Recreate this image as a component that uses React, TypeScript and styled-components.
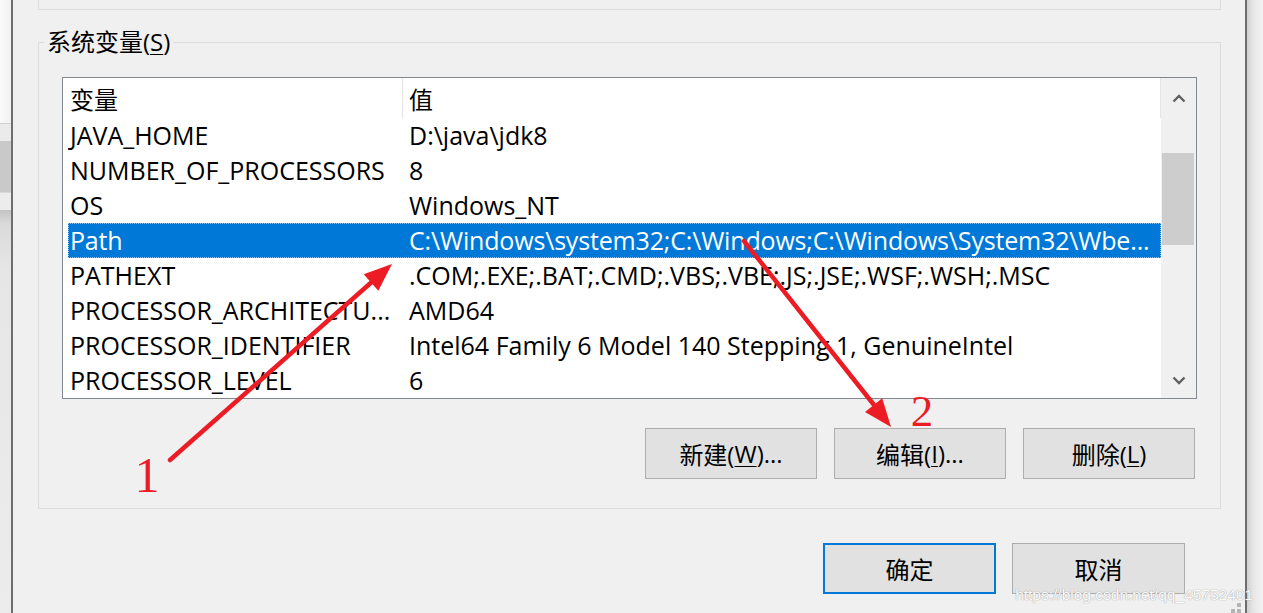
import React from "react";
import styled, { createGlobalStyle } from "styled-components";

const GlobalStyle = createGlobalStyle`
  html, body { margin: 0; padding: 0; background: #f0f0f0; overflow: hidden; }
  body { font-family: "Open Sans", "Noto Sans CJK SC", sans-serif; }
  * { box-sizing: border-box; }
`;

const Page = styled.div`
  position: relative;
  display: flex;
  width: 1263px;
  height: 613px;
  overflow: hidden;
  background: #f0f0f0;
  color: #000;
  font-size: 24px;
`;

const BehindStrip = styled.div`
  width: 11px;
  flex-shrink: 0;
  display: flex;
  flex-direction: column;
`;

const Segment = styled.div<{ $h?: number; $bg: string }>`
  height: ${(p) => (p.$h ? `${p.$h}px` : "auto")};
  flex: ${(p) => (p.$h ? "0 0 auto" : "1")};
  background: ${(p) => p.$bg};
`;

const EdgeLine = styled.div`
  width: 2px;
  flex-shrink: 0;
  background: #6e6e6e;
`;

const Shadow = styled.div`
  width: 16px;
  flex-shrink: 0;
  background: linear-gradient(to right, #cfcfcf, #e6e6e6 6px, #f3f3f3);
`;

const Dialog = styled.div`
  flex: 1;
  min-width: 0;
  display: flex;
  flex-direction: column;
`;

const PrevGroup = styled.div`
  height: 10px;
  margin: 0 24px 0 25px;
  border: 1px solid #dcdcdc;
  border-top: none;
`;

const GroupBox = styled.fieldset`
  margin: 17px 24px 0 25px;
  padding: 20px 23px 29px 23px;
  border: 1px solid #dcdcdc;
  min-width: 0;
`;

const Legend = styled.legend`
  font-size: 24px;
  line-height: 30px;
  padding: 0 3px;
  margin-left: -18px;
`;

const Mn = styled.span`
  text-decoration: underline;
  text-decoration-thickness: 1px;
  text-underline-offset: 3px;
`;

const ListBox = styled.div`
  height: 322px;
  display: flex;
  border: 1px solid #828790;
  background: #fff;
`;

const Table = styled.div`
  flex: 1;
  min-width: 0;
  display: flex;
  flex-direction: column;
`;

const HeaderRow = styled.div`
  height: 40px;
  display: flex;
`;

const HeaderCell = styled.div<{ $w?: number; $pad: number }>`
  ${(p) => (p.$w ? `width: ${p.$w}px;` : "flex: 1;")}
  padding-left: ${(p) => p.$pad}px;
  padding-top: 3px;
  line-height: 38px;
  border-right: 1px solid #e5e5e5;
  white-space: nowrap;
`;

const Row = styled.div<{ $selected?: boolean }>`
  height: 35px;
  margin-left: 5px;
  display: flex;
  font-size: 25px;
  line-height: 35px;
  white-space: nowrap;
  background: ${(p) => (p.$selected ? "#0078d7" : "transparent")};
  color: ${(p) => (p.$selected ? "#fff" : "#000")};
  outline: ${(p) => (p.$selected ? "1px dotted #8fc2ee" : "none")};
  outline-offset: -1px;
  letter-spacing: ${(p) => (p.$selected ? "-0.17px" : "0")};
`;

const Cell = styled.div<{ $w?: number }>`
  ${(p) => (p.$w ? `width: ${p.$w}px;` : "flex: 1;")}
  padding-left: 2px;
  overflow: hidden;
`;

const ScrollBar = styled.div`
  width: 35px;
  flex-shrink: 0;
  background: #f0f0f0;
  display: flex;
  flex-direction: column;
`;

const ArrowBtn = styled.div<{ $h: number }>`
  height: ${(p) => p.$h}px;
  display: flex;
  align-items: center;
  justify-content: center;
`;

const Track = styled.div`
  flex: 1;
`;

const Thumb = styled.div`
  margin: 35px 0 0 1px;
  width: 32px;
  height: 92px;
  background: #cdcdcd;
`;

const ButtonRow = styled.div`
  display: flex;
  justify-content: flex-end;
  gap: 17px;
  margin-top: 29px;
  padding-right: 2px;
`;

const Footer = styled.div`
  display: flex;
  justify-content: flex-end;
  gap: 16px;
  margin: 34px 60px 0 0;
`;

const Button = styled.button<{ $w: number; $primary?: boolean }>`
  width: ${(p) => p.$w}px;
  height: 51px;
  padding: 0;
  background: #e1e1e1;
  border: ${(p) => (p.$primary ? "2px solid #0078d7" : "1px solid #adadad")};
  font-family: inherit;
  font-size: 24px;
  color: #000;
  display: flex;
  align-items: center;
  justify-content: center;
`;

const Overlay = styled.svg`
  position: absolute;
  left: 0;
  top: 0;
  width: 1263px;
  height: 613px;
  pointer-events: none;
`;

const Watermark = styled.div`
  position: absolute;
  right: 10px;
  bottom: 9px;
  font-family: "Liberation Sans", Arial, sans-serif;
  font-size: 15.5px;
  color: #fafafa;
  text-shadow: 0 0 1px #a8a8a8, 0 0 1px #a8a8a8;
`;

const Chevron = ({ up }: { up?: boolean }) => (
  <svg width="14" height="9" viewBox="0 0 14 9">
    <path
      d={up ? "M1.5 7.5 L7 2 L12.5 7.5" : "M1.5 1.5 L7 7 L12.5 1.5"}
      fill="none"
      stroke="#606060"
      strokeWidth="2.4"
    />
  </svg>
);

const rows: { name: string; value: string; selected?: boolean }[] = [
  { name: "JAVA_HOME", value: "D:\\java\\jdk8" },
  { name: "NUMBER_OF_PROCESSORS", value: "8" },
  { name: "OS", value: "Windows_NT" },
  {
    name: "Path",
    value: "C:\\Windows\\system32;C:\\Windows;C:\\Windows\\System32\\Wbe...",
    selected: true,
  },
  { name: "PATHEXT", value: ".COM;.EXE;.BAT;.CMD;.VBS;.VBE;.JS;.JSE;.WSF;.WSH;.MSC" },
  { name: "PROCESSOR_ARCHITECTU...", value: "AMD64" },
  { name: "PROCESSOR_IDENTIFIER", value: "Intel64 Family 6 Model 140 Stepping 1, GenuineIntel" },
  { name: "PROCESSOR_LEVEL", value: "6" },
];

const RED = "#ec1c24";

export default function App() {
  return (
    <>
      <GlobalStyle />
      <Page>
        <BehindStrip>
          <Segment $h={123} $bg="linear-gradient(to right, #fbfbfb, #f1f1f1)" />
          <Segment $h={1} $bg="#d0d0d0" />
          <Segment $h={17} $bg="#ebebeb" />
          <Segment $h={51} $bg="#c9c9c9" />
          <Segment $h={1} $bg="#d8d8d8" />
          <Segment $h={17} $bg="#ececec" />
          <Segment $bg="linear-gradient(to bottom, #c4c4c4, #dadada 14px, #e6e6e6 60px, #ececec)" />
        </BehindStrip>
        <EdgeLine />
        <Dialog>
          <PrevGroup />
          <GroupBox>
            <Legend>
              系统变量(<Mn>S</Mn>)
            </Legend>
            <ListBox>
              <Table>
                <HeaderRow>
                  <HeaderCell $w={340} $pad={7}>变量</HeaderCell>
                  <HeaderCell $pad={6}>值</HeaderCell>
                </HeaderRow>
                {rows.map((r) => (
                  <Row key={r.name} $selected={r.selected}>
                    <Cell $w={339}>{r.name}</Cell>
                    <Cell>{r.value}</Cell>
                  </Row>
                ))}
              </Table>
              <ScrollBar>
                <ArrowBtn $h={40}>
                  <Chevron up />
                </ArrowBtn>
                <Track>
                  <Thumb />
                </Track>
                <ArrowBtn $h={35}>
                  <Chevron />
                </ArrowBtn>
              </ScrollBar>
            </ListBox>
            <ButtonRow>
              <Button $w={172}>
                新建(<Mn>W</Mn>)...
              </Button>
              <Button $w={172}>
                编辑(<Mn>I</Mn>)...
              </Button>
              <Button $w={172}>
                删除(<Mn>L</Mn>)
              </Button>
            </ButtonRow>
          </GroupBox>
          <Footer>
            <Button $w={173} $primary>
              确定
            </Button>
            <Button $w={173}>取消</Button>
          </Footer>
        </Dialog>
        <EdgeLine />
        <Shadow />

        <Overlay viewBox="0 0 1263 613">
          <g stroke={RED} strokeWidth="4.5" strokeLinecap="round" fill="none">
            <line x1="170" y1="460" x2="374" y2="280" />
            <line x1="744" y1="241" x2="878" y2="410" />
          </g>
          <g fill={RED}>
            <polygon points="392,264 378.3,290.8 363.7,274.2" />
            <polygon points="891,427 882.2,398.2 865,412" />
          </g>
          <g fill={RED} fontFamily="'Liberation Serif', 'Times New Roman', serif" textAnchor="middle">
            <text x="147" y="492" fontSize="50">1</text>
            <text x="922" y="426" fontSize="45">2</text>
          </g>
          <g fill="#b4b4b4">
            <rect x="1237" y="603" width="4" height="4" />
            <rect x="1231" y="609" width="4" height="4" />
            <rect x="1237" y="609" width="4" height="4" />
          </g>
        </Overlay>
        <Watermark>https://blog.csdn.net/qq_45752401</Watermark>
      </Page>
    </>
  );
}
